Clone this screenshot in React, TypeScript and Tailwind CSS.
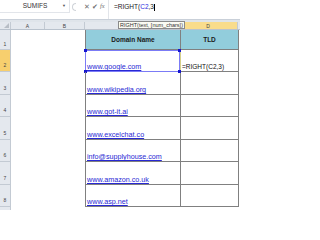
const rows = [
  { n: 2, h: 'h-[22px]', link: 'www.google.com' },
  { n: 3, h: 'h-[23px]', link: 'www.wikipedia.org' },
  { n: 4, h: 'h-[22px]', link: 'www.got-it.ai' },
  { n: 5, h: 'h-[23px]', link: 'www.excelchat.co' },
  { n: 6, h: 'h-[22px]', link: 'info@supplyhouse.com' },
  { n: 7, h: 'h-[23px]', link: 'www.amazon.co.uk' },
  { n: 8, h: 'h-[22px]', link: 'www.asp.net' },
];

export default function App() {
  return (
    <div className="w-[240px] h-[210px] overflow-hidden bg-white text-[#222] font-['Liberation_Sans',Arial,sans-serif]">
      {/* Formula bar */}
      <div className="flex h-[20px] bg-white border-b border-[#c9d0d9]">
        <div className="flex w-[70px] h-[13px] items-center border-b border-r border-[#e2e5ea]">
          <span className="flex-1 text-center text-[6.5px] text-[#333] pl-[8px]">SUMIFS</span>
          <span className="w-[7px] text-[4px] text-[#555]">▼</span>
        </div>
        <div className="flex w-[38px] h-[13px] items-center gap-[2px] pl-[2px] text-[#6f6f6f]">
          <span className="w-[4px] h-[8px] rounded-l-full border-l border-y border-[#cfd3d8]" />
          <span className="ml-[6px] text-[7px] leading-none">✕</span>
          <span className="text-[7px] leading-none">✔</span>
          <span className="text-[6.5px] leading-none italic font-['Liberation_Serif',serif]">fx</span>
        </div>
        <div className="flex-1 border-l border-[#e2e5ea] pl-[5px] pt-[3px] text-[6.5px] leading-[7px]">
          =RIGHT(<span className="text-[#2f2fe0]">C2</span>,3<span className="inline-block w-px h-[7px] align-middle bg-black" />
        </div>
      </div>
      <div className="h-[2px] bg-[#dfe4ea]" />

      {/* Column headers */}
      <div className="relative flex h-[8px] bg-[#e4e8ee] text-[5px] text-[#444] leading-[8px] border-b border-[#b9c2cd]">
        <div className="w-[11px] border-r border-[#c3cad3] flex items-end justify-end">
          <svg width="5" height="5" viewBox="0 0 5 5" className="mb-px mr-px">
            <path d="M5 0V5H0Z" fill="#b8bec6" />
          </svg>
        </div>
        <div className="w-[34px] text-center border-r border-[#c3cad3]">A</div>
        <div className="w-[40px] text-center border-r border-[#c3cad3]">B</div>
        <div className="w-[94px] border-r border-[#c3cad3]" />
        <div className="w-[59px] text-center bg-[#f9dc8c] border-r border-[#c3cad3]">D</div>
        <div className="flex-1" />
        {/* Tooltip */}
        <div className="absolute left-[118px] top-[-1px] h-[8px] px-[1px] bg-[#fbfbf3] border border-[#8a8a8a] text-[5.5px] leading-[6px] text-[#333] whitespace-nowrap">
          RIGHT(text, [num_chars])
        </div>
      </div>

      {/* Row 1 */}
      <div className="flex h-[20px]">
        <div className="w-[11px] bg-[#e4e8ee] border-r border-b border-[#c3cad3] text-[5px] text-[#444] flex items-end justify-center pb-[1px]">1</div>
        <div className="w-[74px]" />
        <div className="w-[95px] bg-[#92cddc] border-l border-b border-[#808080] flex items-center justify-center text-[6.5px] font-bold text-[#1a1a1a]">Domain Name</div>
        <div className="w-[59px] bg-[#92cddc] border-x border-b border-[#808080] flex items-center justify-center text-[6.5px] font-bold text-[#1a1a1a]">TLD</div>
      </div>

      {rows.map((r) => {
        const active = r.n === 2;
        return (
          <div key={r.n} className={`flex ${r.h}`}>
            <div className={`w-[11px] border-r border-b border-[#c3cad3] text-[5px] text-[#444] flex items-end justify-center pb-[2px] ${active ? 'bg-[#f7cf6e]' : 'bg-[#e4e8ee]'}`}>{r.n}</div>
            <div className="w-[74px]" />
            <div className={`relative w-[95px] flex items-end pl-[1px] border-l border-b ${active ? 'border-[#7b7bf6] border-r border-t' : 'border-[#808080]'}`}>
              <span className="text-[7.2px] leading-[8px] text-[#2828d4] underline decoration-[0.5px] whitespace-nowrap">{r.link}</span>
              {active && (
                <>
                  <span className="absolute left-[-2px] top-[-2px] w-[3px] h-[3px] bg-[#1515d0]" />
                  <span className="absolute right-[-2px] top-[-2px] w-[3px] h-[3px] bg-[#1515d0]" />
                  <span className="absolute left-[-2px] bottom-[-2px] w-[3px] h-[3px] bg-[#1515d0]" />
                  <span className="absolute right-[-2px] bottom-[-2px] w-[3px] h-[3px] bg-[#1515d0]" />
                </>
              )}
            </div>
            <div className={`w-[59px] flex items-end pl-[1px] border-x border-b border-[#808080] ${active ? 'border-l-[#d6d08a]' : ''}`}>
              {active && <span className="text-[6.5px] leading-[9px] text-[#111] whitespace-nowrap">=RIGHT(C2,3)</span>}
            </div>
          </div>
        );
      })}

      {/* Row 9 */}
      <div className="flex h-[3px]">
        <div className="w-[11px] bg-[#e4e8ee] border-r border-[#c3cad3]" />
        <div className="flex-1" />
      </div>
    </div>
  );
}
